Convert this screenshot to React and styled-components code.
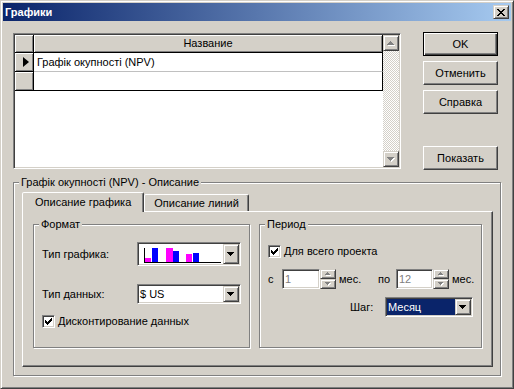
import React from "react";
import styled, { createGlobalStyle, css } from "styled-components";

const FACE = "#d4d0c8";

const GlobalStyle = createGlobalStyle`
  html, body {
    margin: 0;
    padding: 0;
    background: ${FACE};
  }
  body {
    font-family: "Liberation Sans", Arial, sans-serif;
    font-size: 11px;
    line-height: 13px;
    color: #000;
  }
  * {
    box-sizing: border-box;
  }
`;

const raised = css`
  background: ${FACE};
  border: 1px solid;
  border-color: ${FACE} #404040 #404040 ${FACE};
  box-shadow: inset 1px 1px #fff, inset -1px -1px #808080;
`;

const sunken = css`
  border: 1px solid;
  border-color: #808080 #fff #fff #808080;
  padding: 1px;
  box-shadow: inset 1px 1px #404040, inset -1px -1px ${FACE};
`;

const Window = styled.div`
  width: 514px;
  height: 389px;
  background: ${FACE};
  border: 1px solid;
  border-color: ${FACE} #404040 #404040 ${FACE};
  box-shadow: inset 1px 1px #fff, inset -1px -1px #808080;
  padding: 2px;
  display: flex;
  flex-direction: column;
`;

const TitleBar = styled.div`
  height: 18px;
  flex: none;
  display: flex;
  align-items: center;
  justify-content: space-between;
  padding: 0 2px;
  background: linear-gradient(to right, #0a246a, #a6caf0);
  color: #fff;
  font-weight: bold;
`;

const CaptionButton = styled.div`
  ${raised}
  width: 16px;
  height: 14px;
  display: flex;
  align-items: center;
  justify-content: center;
`;

const TopRow = styled.div`
  display: flex;
  align-items: flex-start;
  padding: 11px 0 0 10px;
`;

const GridFrame = styled.div`
  ${sunken}
  width: 388px;
  height: 136px;
  margin-top: 1px;
  background: #fff;
  display: flex;
`;

const GridBody = styled.div`
  flex: 1;
  display: flex;
  flex-direction: column;
`;

const GridRow = styled.div`
  display: flex;
  height: ${(p) => p.$h}px;
`;

const IndCell = styled.div`
  width: 19px;
  background: ${FACE};
  border-right: 1px solid #000;
  border-bottom: 1px solid #000;
  box-shadow: inset 1px 1px #fff, inset -1px -1px #808080;
  display: flex;
  align-items: center;
  padding-left: 8px;
`;

const DataCell = styled.div`
  flex: 1;
  display: flex;
  align-items: center;
  border-right: 1px solid #000;
  border-bottom: 1px solid ${(p) => p.$line || "#000"};
  padding-left: 3px;
  ${(p) =>
    p.$header &&
    css`
      background: ${FACE};
      justify-content: center;
      padding-left: 0;
      box-shadow: inset 1px 1px #fff, inset -1px -1px #808080;
    `}
`;

const ScrollBar = styled.div`
  width: 16px;
  display: flex;
  flex-direction: column;
`;

const ArrowButton = styled.div`
  ${raised}
  width: 16px;
  height: 16px;
  display: flex;
  align-items: center;
  justify-content: center;
`;

const Track = styled.div`
  flex: 1;
  background: repeating-conic-gradient(#fff 0 25%, ${FACE} 0 50%) 0 0 / 2px 2px;
`;

const ButtonColumn = styled.div`
  display: flex;
  flex-direction: column;
  margin-left: 22px;
`;

const PushButton = styled.div`
  width: 75px;
  height: 24px;
  margin-top: ${(p) => p.$mt || 0}px;
  background: ${FACE};
  display: flex;
  align-items: center;
  justify-content: center;
  border: 1px solid;
  border-color: #fff #404040 #404040 #fff;
  box-shadow: inset -1px -1px #808080;
  ${(p) =>
    p.$default &&
    css`
      border-color: #000;
      box-shadow: inset 1px 1px #fff, inset -1px -1px #404040,
        inset -2px -2px #808080;
    `}
`;

const GroupBox = styled.fieldset`
  margin: ${(p) => p.$margin || "0"};
  padding: ${(p) => p.$pad};
  width: ${(p) => (p.$w ? `${p.$w}px` : "auto")};
  min-width: 0;
  border: 1px solid #808080;
  box-shadow: inset 1px 1px #fff, 1px 1px #fff;
`;

const Legend = styled.legend`
  padding: 0 2px;
  margin-left: -3px;
  line-height: 13px;
  background: ${FACE};
`;

const TabStrip = styled.div`
  display: flex;
  align-items: flex-end;
  height: 19px;
`;

const Tab = styled.div`
  height: ${(p) => (p.$active ? 20 : 17)}px;
  padding: 0 ${(p) => (p.$active ? 12 : 9)}px;
  margin-bottom: ${(p) => (p.$active ? -1 : 0)}px;
  position: relative;
  z-index: ${(p) => (p.$active ? 1 : 0)};
  background: ${FACE};
  border: 1px solid;
  border-bottom: none;
  border-color: #fff #404040 transparent #fff;
  border-radius: 2px 2px 0 0;
  box-shadow: inset -1px 0 #808080;
  display: flex;
  align-items: center;
  justify-content: center;
  white-space: nowrap;
`;

const TabPanel = styled.div`
  height: 156px;
  border: 1px solid;
  border-color: #fff #404040 #404040 #fff;
  box-shadow: inset -1px -1px #808080;
  padding: 6px 0 18px 10px;
  display: flex;
  gap: 9px;
`;

const Row = styled.div`
  display: flex;
  align-items: center;
  height: ${(p) => p.$h}px;
  margin-top: ${(p) => p.$mt || 0}px;
  padding-left: ${(p) => p.$pl || 0}px;
`;

const Label = styled.span`
  width: ${(p) => (p.$w ? `${p.$w}px` : "auto")};
  margin-left: ${(p) => p.$ml || 0}px;
  flex: none;
  white-space: nowrap;
`;

const Combo = styled.div`
  ${sunken}
  width: ${(p) => p.$w}px;
  height: ${(p) => p.$h}px;
  background: #fff;
  display: flex;
`;

const ComboValue = styled.div`
  flex: 1;
  display: flex;
  align-items: center;
  padding-left: 1px;
  background: ${(p) => (p.$selected ? "#0a246a" : "#fff")};
  color: ${(p) => (p.$selected ? "#fff" : "#000")};
  overflow: hidden;
`;

const DropButton = styled.div`
  ${raised}
  width: 16px;
  display: flex;
  align-items: center;
  justify-content: center;
`;

const Edit = styled.div`
  ${sunken}
  width: ${(p) => p.$w}px;
  height: 20px;
  background: #fff;
  color: #808080;
  display: flex;
  align-items: center;
  padding-left: 2px;
`;

const Spin = styled.div`
  width: 16px;
  height: 20px;
  display: flex;
  flex-direction: column;
`;

const SpinButton = styled.div`
  ${raised}
  flex: 1;
  display: flex;
  align-items: center;
  justify-content: center;
`;

const CheckRow = styled.label`
  display: flex;
  align-items: center;
  gap: 3px;
  height: 13px;
  margin-top: ${(p) => p.$mt || 0}px;
`;

const CheckBox = styled.span`
  ${sunken}
  width: 13px;
  height: 13px;
  background: #fff;
  display: flex;
  align-items: center;
  justify-content: center;
`;

const UP = "M3 0h1v1h1v1h1v1h1v1H0V3h1V2h1V1h1z";
const DOWN = "M0 0h7v1H6v1H5v1H4v1H3V3H2V2H1V1H0z";
const SMALL_UP = "M2 0h1v1h1v1h1v1H0V2h1V1h1z";
const SMALL_DOWN = "M0 0h5v1H4v1H3v1H2V2H1V1H0z";

function Arrow({ d, w, h, disabled }) {
  return (
    <svg width={w + 1} height={h + 1} shapeRendering="crispEdges">
      {disabled && <path d={d} fill="#fff" transform="translate(1 1)" />}
      <path d={d} fill={disabled ? "#808080" : "#000"} />
    </svg>
  );
}

function Check() {
  return (
    <svg width="7" height="7" viewBox="0 0 7 7" shapeRendering="crispEdges">
      <path
        d="M6 0h1v3H6v1H5v1H4v1H3v1H2V6H1V5H0V2h1v1h1v1h1V3h1V2h1V1h1z"
        fill="#000"
      />
    </svg>
  );
}

function ChartPreview() {
  const bars = [
    [5, 14, 6, 4, "#ff00ff"],
    [12, 4, 6, 14, "#0000ff"],
    [26, 4, 7, 14, "#ff00ff"],
    [33, 7, 6, 11, "#0000ff"],
    [47, 10, 6, 8, "#ff00ff"],
    [54, 9, 6, 9, "#0000ff"],
  ];
  return (
    <svg width="84" height="20" viewBox="0 0 84 20" shapeRendering="crispEdges">
      {bars.map(([x, y, w, h, c], i) => (
        <rect key={i} x={x} y={y} width={w} height={h} fill={c} />
      ))}
      <rect x="4" y="4" width="1" height="15" fill="#000" />
      <rect x="4" y="18" width="78" height="1" fill="#000" />
    </svg>
  );
}

function ComboBox({ w, h, selected, children }) {
  return (
    <Combo $w={w} $h={h}>
      <ComboValue $selected={selected}>{children}</ComboValue>
      <DropButton>
        <Arrow d={DOWN} w={7} h={4} />
      </DropButton>
    </Combo>
  );
}

function SpinEdit({ w, value }) {
  return (
    <>
      <Edit $w={w}>{value}</Edit>
      <Spin>
        <SpinButton>
          <Arrow d={SMALL_UP} w={5} h={3} disabled />
        </SpinButton>
        <SpinButton>
          <Arrow d={SMALL_DOWN} w={5} h={3} disabled />
        </SpinButton>
      </Spin>
    </>
  );
}

export default function App() {
  return (
    <>
      <GlobalStyle />
      <Window>
        <TitleBar>
          <span>Графики</span>
          <CaptionButton>
            <svg width="8" height="7" viewBox="0 0 8 7" shapeRendering="crispEdges">
              <path
                d="M0 0h2v1h1v1h2V1h1V0h2v1H7v1H6v1H5v1h1v1h1v1h1v1H6V6H5V5H3v1H2v1H0V6h1V5h1V4h1V3H2V2H1V1H0z"
                fill="#000"
              />
            </svg>
          </CaptionButton>
        </TitleBar>

        <TopRow>
          <GridFrame>
            <GridBody>
              <GridRow $h={18}>
                <IndCell />
                <DataCell $header>Название</DataCell>
              </GridRow>
              <GridRow $h={19}>
                <IndCell>
                  <svg width="6" height="10" viewBox="0 0 6 10">
                    <path d="M0 0L6 5L0 10z" fill="#000" />
                  </svg>
                </IndCell>
                <DataCell $line="#c0c0c0">Графік окупності (NPV)</DataCell>
              </GridRow>
              <GridRow $h={19}>
                <IndCell />
                <DataCell />
              </GridRow>
            </GridBody>
            <ScrollBar>
              <ArrowButton>
                <Arrow d={UP} w={7} h={4} disabled />
              </ArrowButton>
              <Track />
              <ArrowButton>
                <Arrow d={DOWN} w={7} h={4} disabled />
              </ArrowButton>
            </ScrollBar>
          </GridFrame>

          <ButtonColumn>
            <PushButton $default>OK</PushButton>
            <PushButton $mt={5}>Отменить</PushButton>
            <PushButton $mt={5}>Справка</PushButton>
            <PushButton $mt={32}>Показать</PushButton>
          </ButtonColumn>
        </TopRow>

        <GroupBox $margin="6px 10px 0" $pad="3px 7px 8px 8px">
          <Legend>Графік окупності (NPV) - Описание</Legend>
          <TabStrip>
            <Tab $active>Описание графика</Tab>
            <Tab>Описание линий</Tab>
          </TabStrip>
          <TabPanel>
            <GroupBox $w={217} $pad="11px 0 0 8px">
              <Legend>Формат</Legend>
              <Row $h={24}>
                <Label $w={95}>Тип графика:</Label>
                <ComboBox w={104} h={24}>
                  <ChartPreview />
                </ComboBox>
              </Row>
              <Row $h={20} $mt={18}>
                <Label $w={95}>Тип данных:</Label>
                <ComboBox w={104} h={20}>
                  $ US
                </ComboBox>
              </Row>
              <CheckRow $mt={11}>
                <CheckBox>
                  <Check />
                </CheckBox>
                Дисконтирование данных
              </CheckRow>
            </GroupBox>

            <GroupBox $w={223} $pad="14px 0 0 8px">
              <Legend>Период</Legend>
              <CheckRow>
                <CheckBox>
                  <Check />
                </CheckBox>
                Для всего проекта
              </CheckRow>
              <Row $h={20} $mt={11}>
                <Label $w={14}>с</Label>
                <SpinEdit w={38} value="1" />
                <Label $w={39} $ml={3}>
                  мес.
                </Label>
                <Label $w={18}>по</Label>
                <SpinEdit w={37} value="12" />
                <Label $ml={3}>мес.</Label>
              </Row>
              <Row $h={20} $mt={8} $pl={82}>
                <Label $w={35}>Шаг:</Label>
                <ComboBox w={88} h={20} selected>
                  Месяц
                </ComboBox>
              </Row>
            </GroupBox>
          </TabPanel>
        </GroupBox>
      </Window>
    </>
  );
}
